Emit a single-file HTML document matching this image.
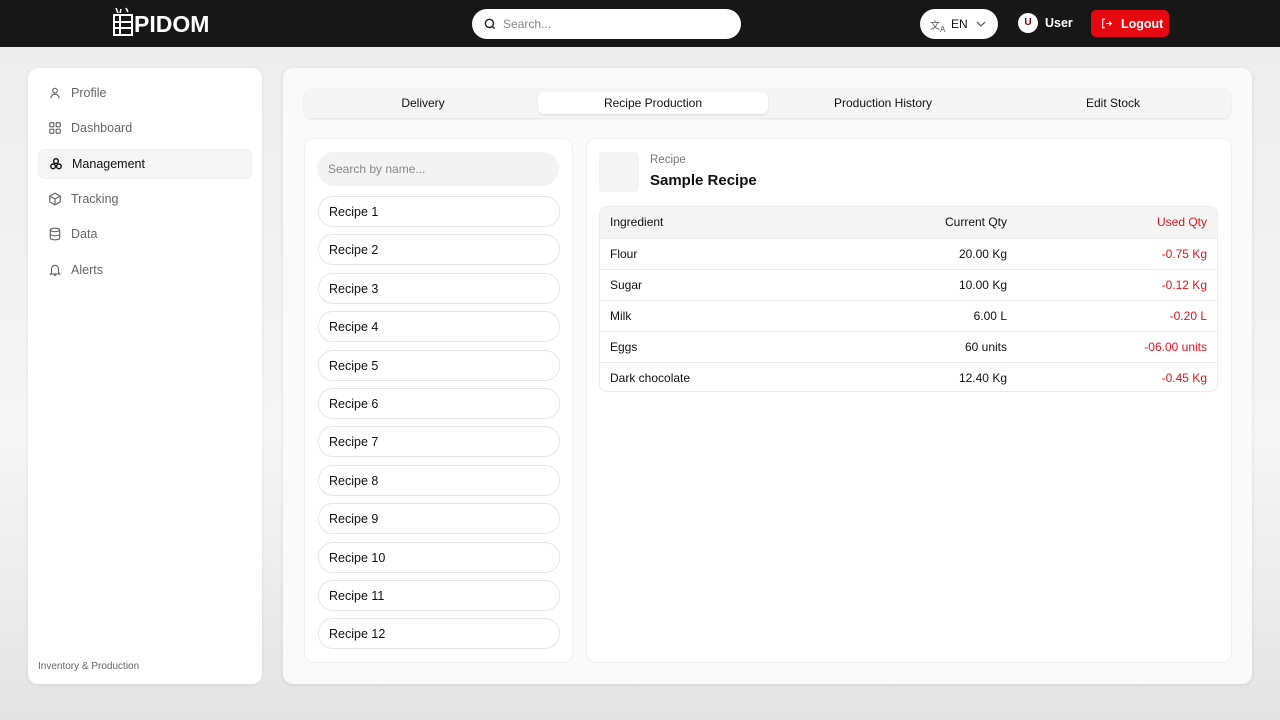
<!DOCTYPE html>
<html><head><style>
*{box-sizing:border-box;margin:0;padding:0}
body{width:1280px;height:720px;overflow:hidden;font-family:"Liberation Sans",sans-serif;background:linear-gradient(#ececec,#f6f6f6 60%,#e4e4e4);position:relative;color:#111}
.hdr{position:absolute;left:0;top:0;width:1280px;height:47px;background:#171717}
.abs{position:absolute}
.side{left:28px;top:68px;width:234px;height:616px;background:#fff;border-radius:10px;box-shadow:0 1px 4px rgba(0,0,0,.08)}
.nav{position:absolute;left:10px;width:214px;height:30px;display:flex;align-items:center;padding-left:10px;font-size:12.5px;color:#666;border-radius:7px}
.nav svg{width:14px;height:14px;margin-right:9px}
.main{left:283px;top:68px;width:969px;height:616px;background:#fafafa;border-radius:10px;box-shadow:0 1px 4px rgba(0,0,0,.1)}
.tabs{left:21px;top:20px;width:927px;height:30px;background:#f5f5f5;border-radius:8px;box-shadow:0 1px 2px rgba(0,0,0,.1)}
.tab{position:absolute;top:0;height:30px;line-height:30px;width:230px;text-align:center;font-size:12px;color:#111}
.panel{background:#fff;border-radius:10px;border:1px solid #f0f0f0}
.ri{position:absolute;left:13px;width:242px;height:31px;border:1px solid #e6e6e6;border-radius:15px;font-size:12.5px;line-height:30px;padding-left:10px}
table{border-collapse:collapse;width:100%;font-size:12px}
td{height:31px;border-top:1px solid #ececec;padding:0 10px}
.r{text-align:right}.red{color:#e5141b}
</style></head><body>
<div class="hdr">
 <svg class="abs" style="left:113px;top:6px" width="22" height="31" viewBox="0 0 22 31" fill="none" stroke="#fff" stroke-width="2">
  <path d="M3 2l2 5M8 3l-1 4M13 2l2 4" stroke-width="1.5"/><rect x="1" y="9" width="18" height="20"/><path d="M1 16h18M1 22h18M7 9v20"/>
 </svg>
 <div class="abs" style="left:134px;top:11px;font-size:23px;font-weight:bold;color:#fff">PIDOM</div>
 <div class="abs" style="left:472px;top:9px;width:269px;height:30px;background:#fff;border-radius:15px">
  <svg class="abs" style="left:11px;top:8px" width="14" height="14" viewBox="0 0 24 24" fill="none" stroke="#222" stroke-width="2.4"><circle cx="11" cy="11" r="7"/><path d="M20 20l-4-4"/></svg>
  <span class="abs" style="left:31px;top:8px;font-size:12px;color:#888">Search...</span>
 </div>
 <div class="abs" style="left:920px;top:9px;width:78px;height:30px;background:#fff;border-radius:15px;font-size:12px">
  <span class="abs" style="left:10px;top:8px;font-size:10px;color:#555">文<sub style="font-size:8px">A</sub></span>
  <span class="abs" style="left:31px;top:8px">EN</span>
  <svg class="abs" style="left:56px;top:11px" width="10" height="8" viewBox="0 0 10 8" fill="none" stroke="#666" stroke-width="1.3"><path d="M1 2l4 4 4-4"/></svg>
 </div>
 <div class="abs" style="left:1018px;top:13px;width:20px;height:20px;background:#fff;border-radius:10px;font-size:10px;font-weight:bold;text-align:center;line-height:20px;color:#800">U</div>
 <span class="abs" style="left:1045px;top:16px;color:#fff;font-size:12.5px;font-weight:bold">User</span>
 <div class="abs" style="left:1091px;top:10px;width:78px;height:27px;background:#e5080f;border-radius:5px;color:#fff;font-size:12.5px;font-weight:bold">
  <svg class="abs" style="left:9px;top:7px" width="13" height="13" viewBox="0 0 24 24" fill="none" stroke="#fff" stroke-width="2"><path d="M9 4H5v16h4M11 12h10M17 8l4 4-4 4"/></svg>
  <span class="abs" style="left:30px;top:7px">Logout</span>
 </div>
</div>
<div class="abs side">
 <div class="nav" style="top:10px"><svg viewBox="0 0 24 24" fill="none" stroke="#666" stroke-width="2"><circle cx="12" cy="8" r="4"/><path d="M5 21c0-4 3-7 7-7s7 3 7 7"/></svg>Profile</div>
 <div class="nav" style="top:45px"><svg viewBox="0 0 24 24" fill="none" stroke="#666" stroke-width="2"><rect x="3" y="3" width="7" height="7" rx="1"/><rect x="14" y="3" width="7" height="7" rx="1"/><rect x="3" y="14" width="7" height="7" rx="1"/><rect x="14" y="14" width="7" height="7" rx="1"/></svg>Dashboard</div>
 <div class="nav" style="top:81px;background:#f6f6f6;color:#111;border:1px solid #efefef"><svg viewBox="0 0 24 24" fill="none" stroke="#111" stroke-width="2.4"><circle cx="12" cy="7" r="4"/><circle cx="7" cy="16" r="4"/><circle cx="17" cy="16" r="4"/></svg>Management</div>
 <div class="nav" style="top:116px"><svg viewBox="0 0 24 24" fill="none" stroke="#666" stroke-width="2"><path d="M12 2l9 5v10l-9 5-9-5V7z M3 7l9 5 9-5M12 12v10"/></svg>Tracking</div>
 <div class="nav" style="top:151px"><svg viewBox="0 0 24 24" fill="none" stroke="#666" stroke-width="2"><ellipse cx="12" cy="5" rx="8" ry="3"/><path d="M4 5v14c0 1.7 3.6 3 8 3s8-1.3 8-3V5M4 12c0 1.7 3.6 3 8 3s8-1.3 8-3"/></svg>Data</div>
 <div class="nav" style="top:187px"><svg viewBox="0 0 24 24" fill="none" stroke="#666" stroke-width="2"><path d="M6 17V10a6 6 0 0112 0v7l2 2H4zM10 21h4"/></svg>Alerts</div>
 <span class="abs" style="left:10px;top:593px;font-size:10px;color:#666">Inventory &amp; Production</span>
</div>
<div class="abs main">
 <div class="abs tabs">
  <div class="tab" style="left:4px">Delivery</div>
  <div class="tab" style="left:234px;top:4px;height:22px;line-height:22px;background:#fff;border-radius:6px;box-shadow:0 1px 2px rgba(0,0,0,.12)">Recipe Production</div>
  <div class="tab" style="left:464px">Production History</div>
  <div class="tab" style="left:694px">Edit Stock</div>
 </div>
 <div class="abs panel" style="left:21px;top:70px;width:269px;height:525px">
  <div class="abs" style="left:12px;top:13px;width:242px;height:34px;background:#f3f3f3;border-radius:17px;font-size:12px;color:#888;line-height:34px;padding-left:11px">Search by name...</div>
  <div class="ri" style="top:57px">Recipe 1</div>
  <div class="ri" style="top:95px">Recipe 2</div>
  <div class="ri" style="top:134px">Recipe 3</div>
  <div class="ri" style="top:172px">Recipe 4</div>
  <div class="ri" style="top:211px">Recipe 5</div>
  <div class="ri" style="top:249px">Recipe 6</div>
  <div class="ri" style="top:287px">Recipe 7</div>
  <div class="ri" style="top:326px">Recipe 8</div>
  <div class="ri" style="top:364px">Recipe 9</div>
  <div class="ri" style="top:403px">Recipe 10</div>
  <div class="ri" style="top:441px">Recipe 11</div>
  <div class="ri" style="top:479px">Recipe 12</div>
 </div>
 <div class="abs panel" style="left:303px;top:70px;width:646px;height:525px">
  <div class="abs" style="left:12px;top:13px;width:40px;height:40px;background:#f4f4f4;border-radius:4px"></div>
  <span class="abs" style="left:63px;top:15px;font-size:11.5px;color:#777">Recipe</span>
  <span class="abs" style="left:63px;top:33px;font-size:15px;font-weight:bold;color:#111">Sample Recipe</span>
  <div class="abs" style="left:12px;top:67px;width:619px;height:186px;border:1px solid #ececec;border-radius:8px;overflow:hidden">
  <table>
   <tr style="background:#f5f5f5"><td style="border:0;height:30px">Ingredient</td><td class="r" style="border:0">Current Qty</td><td class="r red" style="border:0;width:200px">Used Qty</td></tr>
   <tr><td>Flour</td><td class="r">20.00 Kg</td><td class="r red">-0.75 Kg</td></tr>
   <tr><td>Sugar</td><td class="r">10.00 Kg</td><td class="r red">-0.12 Kg</td></tr>
   <tr><td>Milk</td><td class="r">6.00 L</td><td class="r red">-0.20 L</td></tr>
   <tr><td>Eggs</td><td class="r">60 units</td><td class="r red">-06.00 units</td></tr>
   <tr><td>Dark chocolate</td><td class="r">12.40 Kg</td><td class="r red">-0.45 Kg</td></tr>
  </table>
  </div>
 </div>
</div>
</body></html>
